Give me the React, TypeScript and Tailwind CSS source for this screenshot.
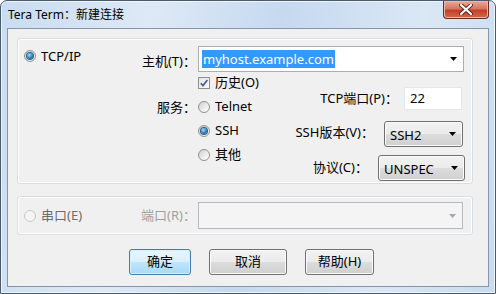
import React from "react";

const Radio = ({ checked = false, disabled = false }: { checked?: boolean; disabled?: boolean }) => (
    <span
        className={
            "flex h-[12px] w-[12px] shrink-0 items-center justify-center rounded-full border " +
            (disabled
                ? "border-[#c8c8c8] bg-[#f4f4f4]"
                : "border-[#8e8f8f] bg-[linear-gradient(135deg,#cfcfcf,#f3f3f3_70%,#ffffff)]")
        }
    >
        {checked && (
            <span className="h-[6px] w-[6px] rounded-full bg-[radial-gradient(circle_at_40%_35%,#a6dcf8,#2a7cc0_55%,#0f3f70)] shadow-[0_0_0_1px_#2b5a86]" />
        )}
    </span>
);

const Checkbox = () => (
    <span className="flex h-[12px] w-[12px] shrink-0 items-center justify-center border border-[#8e8f8f] bg-[linear-gradient(135deg,#e4e4e4,#fbfbfb)]">
        <svg width="10" height="10" viewBox="0 0 10 10">
            <path d="M1.8 5.2 L4 7.6 L8.4 2" fill="none" stroke="#4a5f97" strokeWidth="1.7" />
        </svg>
    </span>
);

const Arrow = ({ color = "#000" }: { color?: string }) => (
    <svg width="7" height="4" viewBox="0 0 7 4">
        <polygon points="0,0 7,0 3.5,4" fill={color} />
    </svg>
);

const face =
    "rounded-[3px] border border-[#707070] bg-[linear-gradient(#f2f2f2_0%,#ebebeb_50%,#dddddd_50%,#cfcfcf_100%)] shadow-[inset_0_0_0_1px_#fcfcfc] text-[13px] text-black";
const btn = "flex h-[26px] items-center justify-center " + face;
const drop = "flex h-[26px] items-center justify-between pl-[5px] pr-[6px] " + face;

const App = () => {
    return (
        <div className="h-[294px] w-[496px] overflow-hidden bg-white font-['Noto_Sans','Noto_Sans_CJK_SC',sans-serif]">
            <div className="flex h-[294px] w-[496px] flex-col rounded-t-[7px] border border-[#4a5a70] bg-[linear-gradient(100deg,#c9dcf1_0%,#dde9f6_28%,#c6d9ef_52%,#dae7f5_78%,#c8dbf0_100%)] shadow-[inset_0_0_0_1px_#eef5fc]">
                {/* title bar */}
                <div className="flex h-[27px] shrink-0 items-start justify-between">
                    <span className="pl-[7px] pt-[6px] text-[12px] leading-[16px] text-black">Tera Term：新建连接</span>
                    <div className="mr-[6px] flex h-[18px] w-[46px] items-center justify-center rounded-b-[4px] border border-t-0 border-[#6b2b22] bg-[linear-gradient(#e9ab9c_0%,#d8755f_45%,#c2402a_55%,#d4694c_100%)] shadow-[inset_0_0_0_1px_#f0b8aa]">
                        <svg width="14" height="11" viewBox="0 0 14 11">
                            <path d="M2 1 L12 10 M12 1 L2 10" stroke="#5a231b" strokeWidth="4" strokeLinecap="round" />
                            <path d="M2 1 L12 10 M12 1 L2 10" stroke="#ffffff" strokeWidth="2.2" strokeLinecap="round" />
                        </svg>
                    </div>
                </div>

                {/* client area */}
                <div className="mx-[6px] flex h-[259px] flex-col border border-[#8396ad] bg-[#f0f0f0]">
                    {/* TCP/IP group */}
                    <div className="ml-[9px] mr-[15px] mt-[9px] flex h-[146px] rounded-[3px] border border-[#d5dfe5] pt-[7px] shadow-[inset_0_0_0_1px_#ffffff]">
                        <div className="flex w-[112px] items-start gap-[5px] pl-[6px] pt-[4px]">
                            <Radio checked />
                            <span className="-mt-[3px] text-[13px] leading-[18px] text-black">TCP/IP</span>
                        </div>
                        <div className="flex flex-1 flex-col">
                            <div className="flex h-[26px]">
                                <span className="w-[66px] whitespace-nowrap pt-[6px] text-right text-[13px] leading-[18px] text-black">主机(T)：</span>
                                <div className="ml-[2px] flex w-[266px] items-center justify-between border border-[#abadb3] bg-white pl-[3px] pr-[6px]">
                                    <span className="bg-[#3399ff] px-[1px] text-[13px] leading-[18px] text-white">myhost.example.com</span>
                                    <Arrow />
                                </div>
                            </div>
                            <div className="-mt-[1px] flex">
                                <div className="w-[66px] whitespace-nowrap pt-[24px] text-right text-[13px] leading-[24px] text-black">服务：</div>
                                <div className="ml-[2px] flex w-[80px] shrink-0 flex-col">
                                    <div className="flex h-[24px] items-center gap-[5px]">
                                        <Checkbox />
                                        <span className="whitespace-nowrap text-[13px] text-black">历史(O)</span>
                                    </div>
                                    <div className="flex h-[24px] items-center gap-[5px]">
                                        <Radio />
                                        <span className="text-[13px] text-black">Telnet</span>
                                    </div>
                                    <div className="flex h-[24px] items-center gap-[5px]">
                                        <Radio checked />
                                        <span className="text-[13px] text-black">SSH</span>
                                    </div>
                                    <div className="flex h-[24px] items-center gap-[5px]">
                                        <Radio />
                                        <span className="text-[13px] text-black">其他</span>
                                    </div>
                                </div>
                                <div className="flex w-[186px] flex-col items-end">
                                    <div className="mr-[2px] mt-[16px] flex h-[23px] items-center gap-[6px]">
                                        <span className="whitespace-nowrap text-[13px] text-black">TCP端口(P)：</span>
                                        <div className="flex h-[23px] w-[58px] items-center border border-[#e6e6e6] bg-white pl-[5px] text-[13px] text-black">
                                            22
                                        </div>
                                    </div>
                                    <div className="mr-[1px] mt-[11px] flex h-[26px] items-start gap-[10px]">
                                        <span className="whitespace-nowrap text-[13px] leading-[22px] text-black">SSH版本(V)：</span>
                                        <div className={drop + " w-[79px]"}>
                                            <span className="pt-[3px]">SSH2</span>
                                            <Arrow />
                                        </div>
                                    </div>
                                    <div className="-mr-[1px] mt-[8px] flex h-[26px] items-center gap-[10px]">
                                        <span className="whitespace-nowrap text-[13px] text-black">协议(C)：</span>
                                        <div className={drop + " w-[87px]"}>
                                            <span className="pt-[3px]">UNSPEC</span>
                                            <Arrow />
                                        </div>
                                    </div>
                                </div>
                            </div>
                        </div>
                    </div>

                    {/* serial group */}
                    <div className="ml-[9px] mr-[15px] mt-[12px] flex h-[39px] items-center rounded-[3px] border border-[#d5dfe5] shadow-[inset_0_0_0_1px_#ffffff]">
                        <div className="flex w-[112px] items-center gap-[5px] pl-[6px]">
                            <Radio disabled />
                            <span className="text-[13px] text-[#6d6d6d]">串口(E)</span>
                        </div>
                        <span className="w-[66px] whitespace-nowrap text-right text-[13px] text-[#a0a0a0]">端口(R)：</span>
                        <div className="ml-[2px] flex h-[27px] w-[265px] items-center justify-end border border-[#b5b9bd] bg-[#f4f4f4] pr-[6px]">
                            <Arrow color="#a8a8a8" />
                        </div>
                    </div>

                    {/* buttons */}
                    <div className="mt-[14px] flex gap-[18px] pl-[121px]">
                        <div className="flex h-[26px] w-[62px] items-center justify-center rounded-[3px] border border-[#3c7fb1] bg-[linear-gradient(#eaf6fd_0%,#d9f0fc_50%,#bee6fd_50%,#a7d9f5_100%)] text-[13px] text-black shadow-[inset_0_0_0_1px_#d8f0fc]">
                            确定
                        </div>
                        <div className={btn + " w-[78px]"}>取消</div>
                        <div className={btn + " w-[69px]"}>帮助(H)</div>
                    </div>
                </div>
            </div>
        </div>
    );
};

export default App;
